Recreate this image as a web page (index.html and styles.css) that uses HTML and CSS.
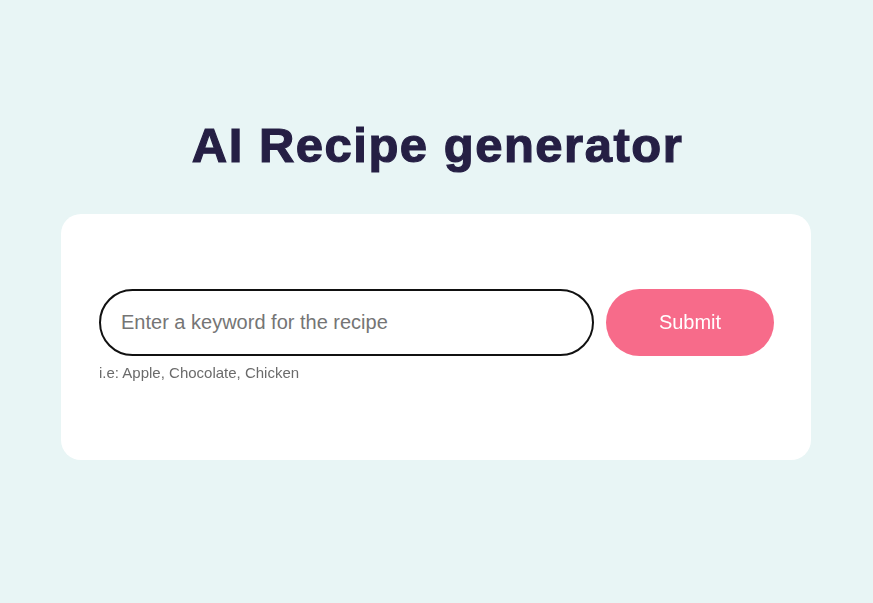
FILE: index.html
```html
<!DOCTYPE html>
<html lang="en">
<head>
<meta charset="utf-8">
<title>AI Recipe generator</title>
<link rel="stylesheet" href="styles.css">
</head>
<body>
<main class="page">
  <h1 class="title">AI Recipe generator</h1>
  <section class="card">
    <form class="form" onsubmit="return false">
      <div class="field">
        <input class="input" type="text" placeholder="Enter a keyword for the recipe" autofocus>
        <small class="hint">i.e: Apple, Chocolate, Chicken</small>
      </div>
      <button class="submit" type="submit">Submit</button>
    </form>
  </section>
</main>
</body>
</html>
```
FILE: styles.css
```css
* { box-sizing: border-box; }
html, body {
  margin: 0;
  padding: 0;
  background: #e8f5f5;
  font-family: "Liberation Sans", Arial, sans-serif;
}
.page {
  display: flex;
  flex-direction: column;
  align-items: center;
  padding-top: 119px;
  padding-right: 1px;
}
.title {
  margin: 0 0 0 3px;
  font-family: "Liberation Sans", Arial, sans-serif;
  font-weight: 900;
  font-size: 49px;
  line-height: 52px;
  letter-spacing: 1.5px;
  color: #251f44;
  -webkit-text-stroke: 1.2px #251f44;
}
.card {
  margin-top: 43px;
  width: 750px;
  height: 246px;
  background: #ffffff;
  border-radius: 20px;
  padding: 75px 37px 0 38px;
}
.form {
  display: flex;
  gap: 12px;
  align-items: flex-start;
}
.field {
  display: flex;
  flex-direction: column;
  width: 495px;
}
.input {
  width: 495px;
  height: 67px;
  border: 2px solid #111111;
  border-radius: 34px;
  padding: 0 20px;
  font-family: "Liberation Sans", Arial, sans-serif;
  font-size: 20px;
  color: #222;
  background: #fff;
  outline: none;
  caret-color: #251f44;
}
.input::placeholder { color: #757575; }
.hint {
  margin-top: 8px;
  font-size: 15px;
  color: #6b6b6b;
  line-height: 17px;
}
.submit {
  width: 168px;
  height: 67px;
  border: none;
  border-radius: 34px;
  background: #f76b8a;
  color: #ffffff;
  font-family: "Liberation Sans", Arial, sans-serif;
  font-size: 20px;
}
```
